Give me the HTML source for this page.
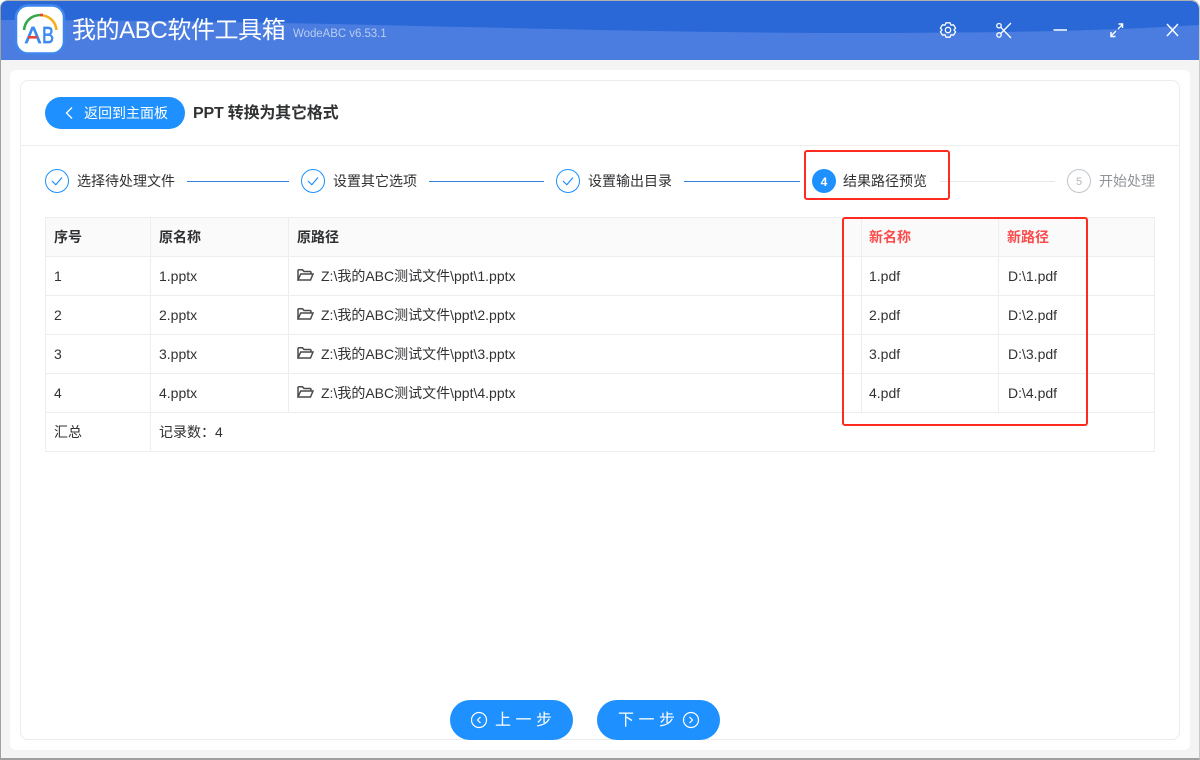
<!DOCTYPE html>
<html lang="zh-CN">
<head>
<meta charset="utf-8">
<title>我的ABC软件工具箱</title>
<style>
*{box-sizing:border-box;margin:0;padding:0}
html,body{width:1200px;height:760px;overflow:hidden;background:#fff}
body{position:relative;font-family:"Liberation Sans","Noto Sans CJK SC",sans-serif;color:#303133}
.abs{position:absolute;white-space:nowrap}
#win{position:absolute;left:0;top:0;width:1200px;height:760px;background:#f4f4f4;border-left:1px solid #a0a0a0;border-right:1px solid #c8c8c8;border-bottom:2px solid #a0a0a0;border-top:1px solid #b0b0b0;border-radius:8px 8px 0 0;overflow:hidden}
#card{position:absolute;left:10px;top:70px;width:1180px;height:680px;background:#fff;border-radius:6px}
#inner{position:absolute;left:20px;top:80px;width:1160px;height:660px;background:#fff;border:1px solid #ececec;border-radius:8px}
.line{position:absolute;height:1px}
.t{position:absolute;white-space:nowrap;font-size:14px;line-height:18px;color:#303133}
.h{font-weight:700;color:#303133}
.red{color:#fb4b4b}
.step{position:absolute;white-space:nowrap;font-size:14px;line-height:18px;top:172px;color:#303133}
.btn{position:absolute;background:#1e90ff;border-radius:20px;color:#fff}
.v{position:absolute;width:1px;background:#eeeeee}
.r{position:absolute;left:45px;width:1110px;height:1px;background:#eeeeee}
.redbox{position:absolute;border:2.5px solid #ff2a20;border-radius:3px}
</style>
</head>
<body>
<div id="win"></div>
<svg class="abs" style="left:0;top:0" width="1200" height="60" viewBox="0 0 1200 60">
  <defs><clipPath id="tb"><path d="M1 8Q1 1 8 1H1190Q1199 1 1199 10V60H1V8Z"/></clipPath></defs>
  <g clip-path="url(#tb)">
    <rect width="1200" height="60" fill="#4a7ddf"/>
    <path d="M0 1H1200V25C1100 31 1000 33 850 33C600 33 300 20 0 20Z" fill="#2a68d7"/>
  </g>
</svg>
<div id="card"></div>
<div id="inner"></div>

<!-- logo -->
<svg class="abs" style="left:0;top:0" width="80" height="60" viewBox="0 0 80 60">
  <rect x="16" y="5.500" width="48" height="48" rx="12" fill="#fff" stroke="#3f86ee" stroke-width="2.500"/>
  <path d="M24 30C25 21 31 15.500 40 15" fill="none" stroke="#35a84a" stroke-width="2.600"/>
  <path d="M40 15C49 15.500 55.500 21 56.500 30" fill="none" stroke="#f2b01e" stroke-width="2.600"/>
  <path d="M40 15H43" fill="none" stroke="#e8443a" stroke-width="2.600"/>
  <text x="25" y="43" font-family="Liberation Sans,sans-serif" font-size="23" fill="#3d8bf0" stroke="#3d8bf0" stroke-width=".7" textLength="16" lengthAdjust="spacingAndGlyphs">A</text>
  <text x="42" y="43" font-family="Liberation Sans,sans-serif" font-size="23" fill="#3d8bf0" stroke="#3d8bf0" stroke-width=".7" textLength="12" lengthAdjust="spacingAndGlyphs">B</text>
  <rect x="28" y="36" width="9" height="2.600" fill="#e8443a"/>
</svg>
<div class="abs" style="left:72px;top:15px;font-size:24px;line-height:32px;letter-spacing:-.4px;color:#fff">我的ABC软件工具箱</div>
<div class="abs" style="left:293px;top:26px;font-size:11.500px;line-height:16px;letter-spacing:-.05px;color:#b9cdf2">WodeABC v6.53.1</div>

<!-- window controls -->
<svg class="abs" style="left:930px;top:15px" width="260" height="30" viewBox="0 0 260 30" fill="none" stroke="#fff" stroke-width="1.300">
  <path d="M16 7.800H20L21 10.200L23.500 9.800L25.600 13.200L24 15L25.600 16.800L23.500 20.200L21 19.800L20 22.200H16L15 19.800L12.500 20.200L10.400 16.800L12 15L10.400 13.200L12.500 9.800L15 10.200Z"/>
  <circle cx="18" cy="15" r="2.700"/>
  <circle cx="69" cy="10.700" r="2.200"/><circle cx="69" cy="20" r="2.200"/>
  <path d="M70.700 12.200L81 23M70.700 18.500L81 8"/>
  <path d="M123.500 15H137" stroke-width="1.500"/>
  <path d="M181 21L186 16M188 14L192.500 9.500"/>
  <path d="M181 17V21.500H185.500M188.500 9H192.500V13" stroke-width="1.500"/>
  <path d="M237 9L248 21M248 9L237 21" stroke-width="1.400"/>
</svg>

<!-- back -->
<div class="btn" style="left:45px;top:97px;width:140px;height:32px;border-radius:16px"></div>
<svg class="abs" style="left:62px;top:105px" width="14" height="16" viewBox="0 0 14 16" fill="none" stroke="#fff" stroke-width="1.300"><path d="M10 2.500L4.500 8L10 13.500"/></svg>
<div class="abs" style="left:84px;top:104px;font-size:14px;line-height:18px;color:#fff">返回到主面板</div>
<div class="abs" style="left:193px;top:104px;font-size:16px;line-height:20px;font-weight:700;letter-spacing:-.2px;color:#303133">PPT 转换为其它格式</div>
<div class="line" style="left:21px;top:145px;width:1158px;background:#eeeeee"></div>

<!-- steps -->
<svg class="abs" style="left:45px;top:169px" width="24" height="24" viewBox="0 0 24 24" fill="none" stroke="#1e90ff"><circle cx="12" cy="12" r="11.500"/><path d="M7 12L10.800 15.800L17 8.500" stroke-width="1.200"/></svg>
<div class="step" style="left:77px">选择待处理文件</div>
<div class="line" style="left:187px;top:181px;width:102px;background:#2f86d8"></div>
<svg class="abs" style="left:301px;top:169px" width="24" height="24" viewBox="0 0 24 24" fill="none" stroke="#1e90ff"><circle cx="12" cy="12" r="11.500"/><path d="M7 12L10.800 15.800L17 8.500" stroke-width="1.200"/></svg>
<div class="step" style="left:333px">设置其它选项</div>
<div class="line" style="left:429px;top:181px;width:115px;background:#2f86d8"></div>
<svg class="abs" style="left:556px;top:169px" width="24" height="24" viewBox="0 0 24 24" fill="none" stroke="#1e90ff"><circle cx="12" cy="12" r="11.500"/><path d="M7 12L10.800 15.800L17 8.500" stroke-width="1.200"/></svg>
<div class="step" style="left:588px">设置输出目录</div>
<div class="line" style="left:684px;top:181px;width:116px;background:#2f86d8"></div>
<div class="abs" style="left:812px;top:169px;width:24px;height:24px;border-radius:50%;background:#1e90ff;color:#fff;font-size:12px;font-weight:700;line-height:26px;text-align:center">4</div>
<div class="step" style="left:843px">结果路径预览</div>
<div class="line" style="left:940px;top:181px;width:115px;background:#e8e8e8"></div>
<div class="abs" style="left:1067px;top:169px;width:24px;height:24px;border-radius:50%;border:1px solid #c0c4cc;color:#b4b8c0;font-size:11px;line-height:24px;text-align:center">5</div>
<div class="step" style="left:1099px;color:#909399">开始处理</div>

<!-- table -->
<div class="abs" style="left:45px;top:217px;width:1110px;height:39px;background:#fafafa"></div>
<div class="r" style="top:217px"></div>
<div class="r" style="top:256px"></div>
<div class="r" style="top:295px"></div>
<div class="r" style="top:334px"></div>
<div class="r" style="top:373px"></div>
<div class="r" style="top:412px"></div>
<div class="r" style="top:451px"></div>
<div class="v" style="left:45px;top:217px;height:234px"></div>
<div class="v" style="left:150px;top:217px;height:234px"></div>
<div class="v" style="left:288px;top:217px;height:195px"></div>
<div class="v" style="left:861px;top:217px;height:195px"></div>
<div class="v" style="left:998px;top:217px;height:195px"></div>
<div class="v" style="left:1154px;top:217px;height:234px"></div>

<div class="t h" style="left:54px;top:228px">序号</div>
<div class="t h" style="left:159px;top:228px">原名称</div>
<div class="t h" style="left:297px;top:228px">原路径</div>
<div class="t h red" style="left:869px;top:228px">新名称</div>
<div class="t h red" style="left:1007px;top:228px">新路径</div>

<div class="t" style="left:54px;top:267px">1</div>
<div class="t" style="left:159px;top:267px">1.pptx</div>
<div class="t" style="left:321px;top:267px">Z:\我的ABC测试文件\ppt\1.pptx</div>
<div class="t" style="left:869px;top:267px">1.pdf</div>
<div class="t" style="left:1008px;top:267px">D:\1.pdf</div>

<div class="t" style="left:54px;top:306px">2</div>
<div class="t" style="left:159px;top:306px">2.pptx</div>
<div class="t" style="left:321px;top:306px">Z:\我的ABC测试文件\ppt\2.pptx</div>
<div class="t" style="left:869px;top:306px">2.pdf</div>
<div class="t" style="left:1008px;top:306px">D:\2.pdf</div>

<div class="t" style="left:54px;top:345px">3</div>
<div class="t" style="left:159px;top:345px">3.pptx</div>
<div class="t" style="left:321px;top:345px">Z:\我的ABC测试文件\ppt\3.pptx</div>
<div class="t" style="left:869px;top:345px">3.pdf</div>
<div class="t" style="left:1008px;top:345px">D:\3.pdf</div>

<div class="t" style="left:54px;top:384px">4</div>
<div class="t" style="left:159px;top:384px">4.pptx</div>
<div class="t" style="left:321px;top:384px">Z:\我的ABC测试文件\ppt\4.pptx</div>
<div class="t" style="left:869px;top:384px">4.pdf</div>
<div class="t" style="left:1008px;top:384px">D:\4.pdf</div>

<div class="t" style="left:54px;top:423px">汇总</div>
<div class="t" style="left:159px;top:423px">记录数：4</div>

<svg class="abs" style="left:297px;top:268px" width="17" height="14" viewBox="0 0 17 14" fill="none" stroke="#4a4a4a" stroke-width="1.500"><path d="M1 12V2.800Q1 1.800 2 1.800H5.500L7 3.500H13Q14 3.500 14 4.500V5.800"/><path d="M1 12L3.700 6H16L13.500 12Z"/></svg>
<svg class="abs" style="left:297px;top:307px" width="17" height="14" viewBox="0 0 17 14" fill="none" stroke="#4a4a4a" stroke-width="1.500"><path d="M1 12V2.800Q1 1.800 2 1.800H5.500L7 3.500H13Q14 3.500 14 4.500V5.800"/><path d="M1 12L3.700 6H16L13.500 12Z"/></svg>
<svg class="abs" style="left:297px;top:346px" width="17" height="14" viewBox="0 0 17 14" fill="none" stroke="#4a4a4a" stroke-width="1.500"><path d="M1 12V2.800Q1 1.800 2 1.800H5.500L7 3.500H13Q14 3.500 14 4.500V5.800"/><path d="M1 12L3.700 6H16L13.500 12Z"/></svg>
<svg class="abs" style="left:297px;top:385px" width="17" height="14" viewBox="0 0 17 14" fill="none" stroke="#4a4a4a" stroke-width="1.500"><path d="M1 12V2.800Q1 1.800 2 1.800H5.500L7 3.500H13Q14 3.500 14 4.500V5.800"/><path d="M1 12L3.700 6H16L13.500 12Z"/></svg>

<!-- red boxes -->
<div class="redbox" style="left:804px;top:150px;width:146px;height:50px"></div>
<div class="redbox" style="left:842px;top:217px;width:246px;height:209px"></div>

<!-- bottom buttons -->
<div class="btn" style="left:450px;top:700px;width:123px;height:40px"></div>
<svg class="abs" style="left:470px;top:711px" width="18" height="18" viewBox="0 0 18 18" fill="none" stroke="#fff" stroke-width="1.200"><circle cx="9" cy="9" r="7.500"/><path d="M10.500 6L7.500 9L10.500 12"/></svg>
<div class="abs" style="left:495px;top:711px;font-size:16px;line-height:20px;letter-spacing:4.500px;color:#fff">上一步</div>
<div class="btn" style="left:597px;top:700px;width:123px;height:40px"></div>
<div class="abs" style="left:618px;top:711px;font-size:16px;line-height:20px;letter-spacing:4.500px;color:#fff">下一步</div>
<svg class="abs" style="left:682px;top:711px" width="18" height="18" viewBox="0 0 18 18" fill="none" stroke="#fff" stroke-width="1.200"><circle cx="9" cy="9" r="7.500"/><path d="M7.500 6L10.500 9L7.500 12"/></svg>
</body>
</html>
